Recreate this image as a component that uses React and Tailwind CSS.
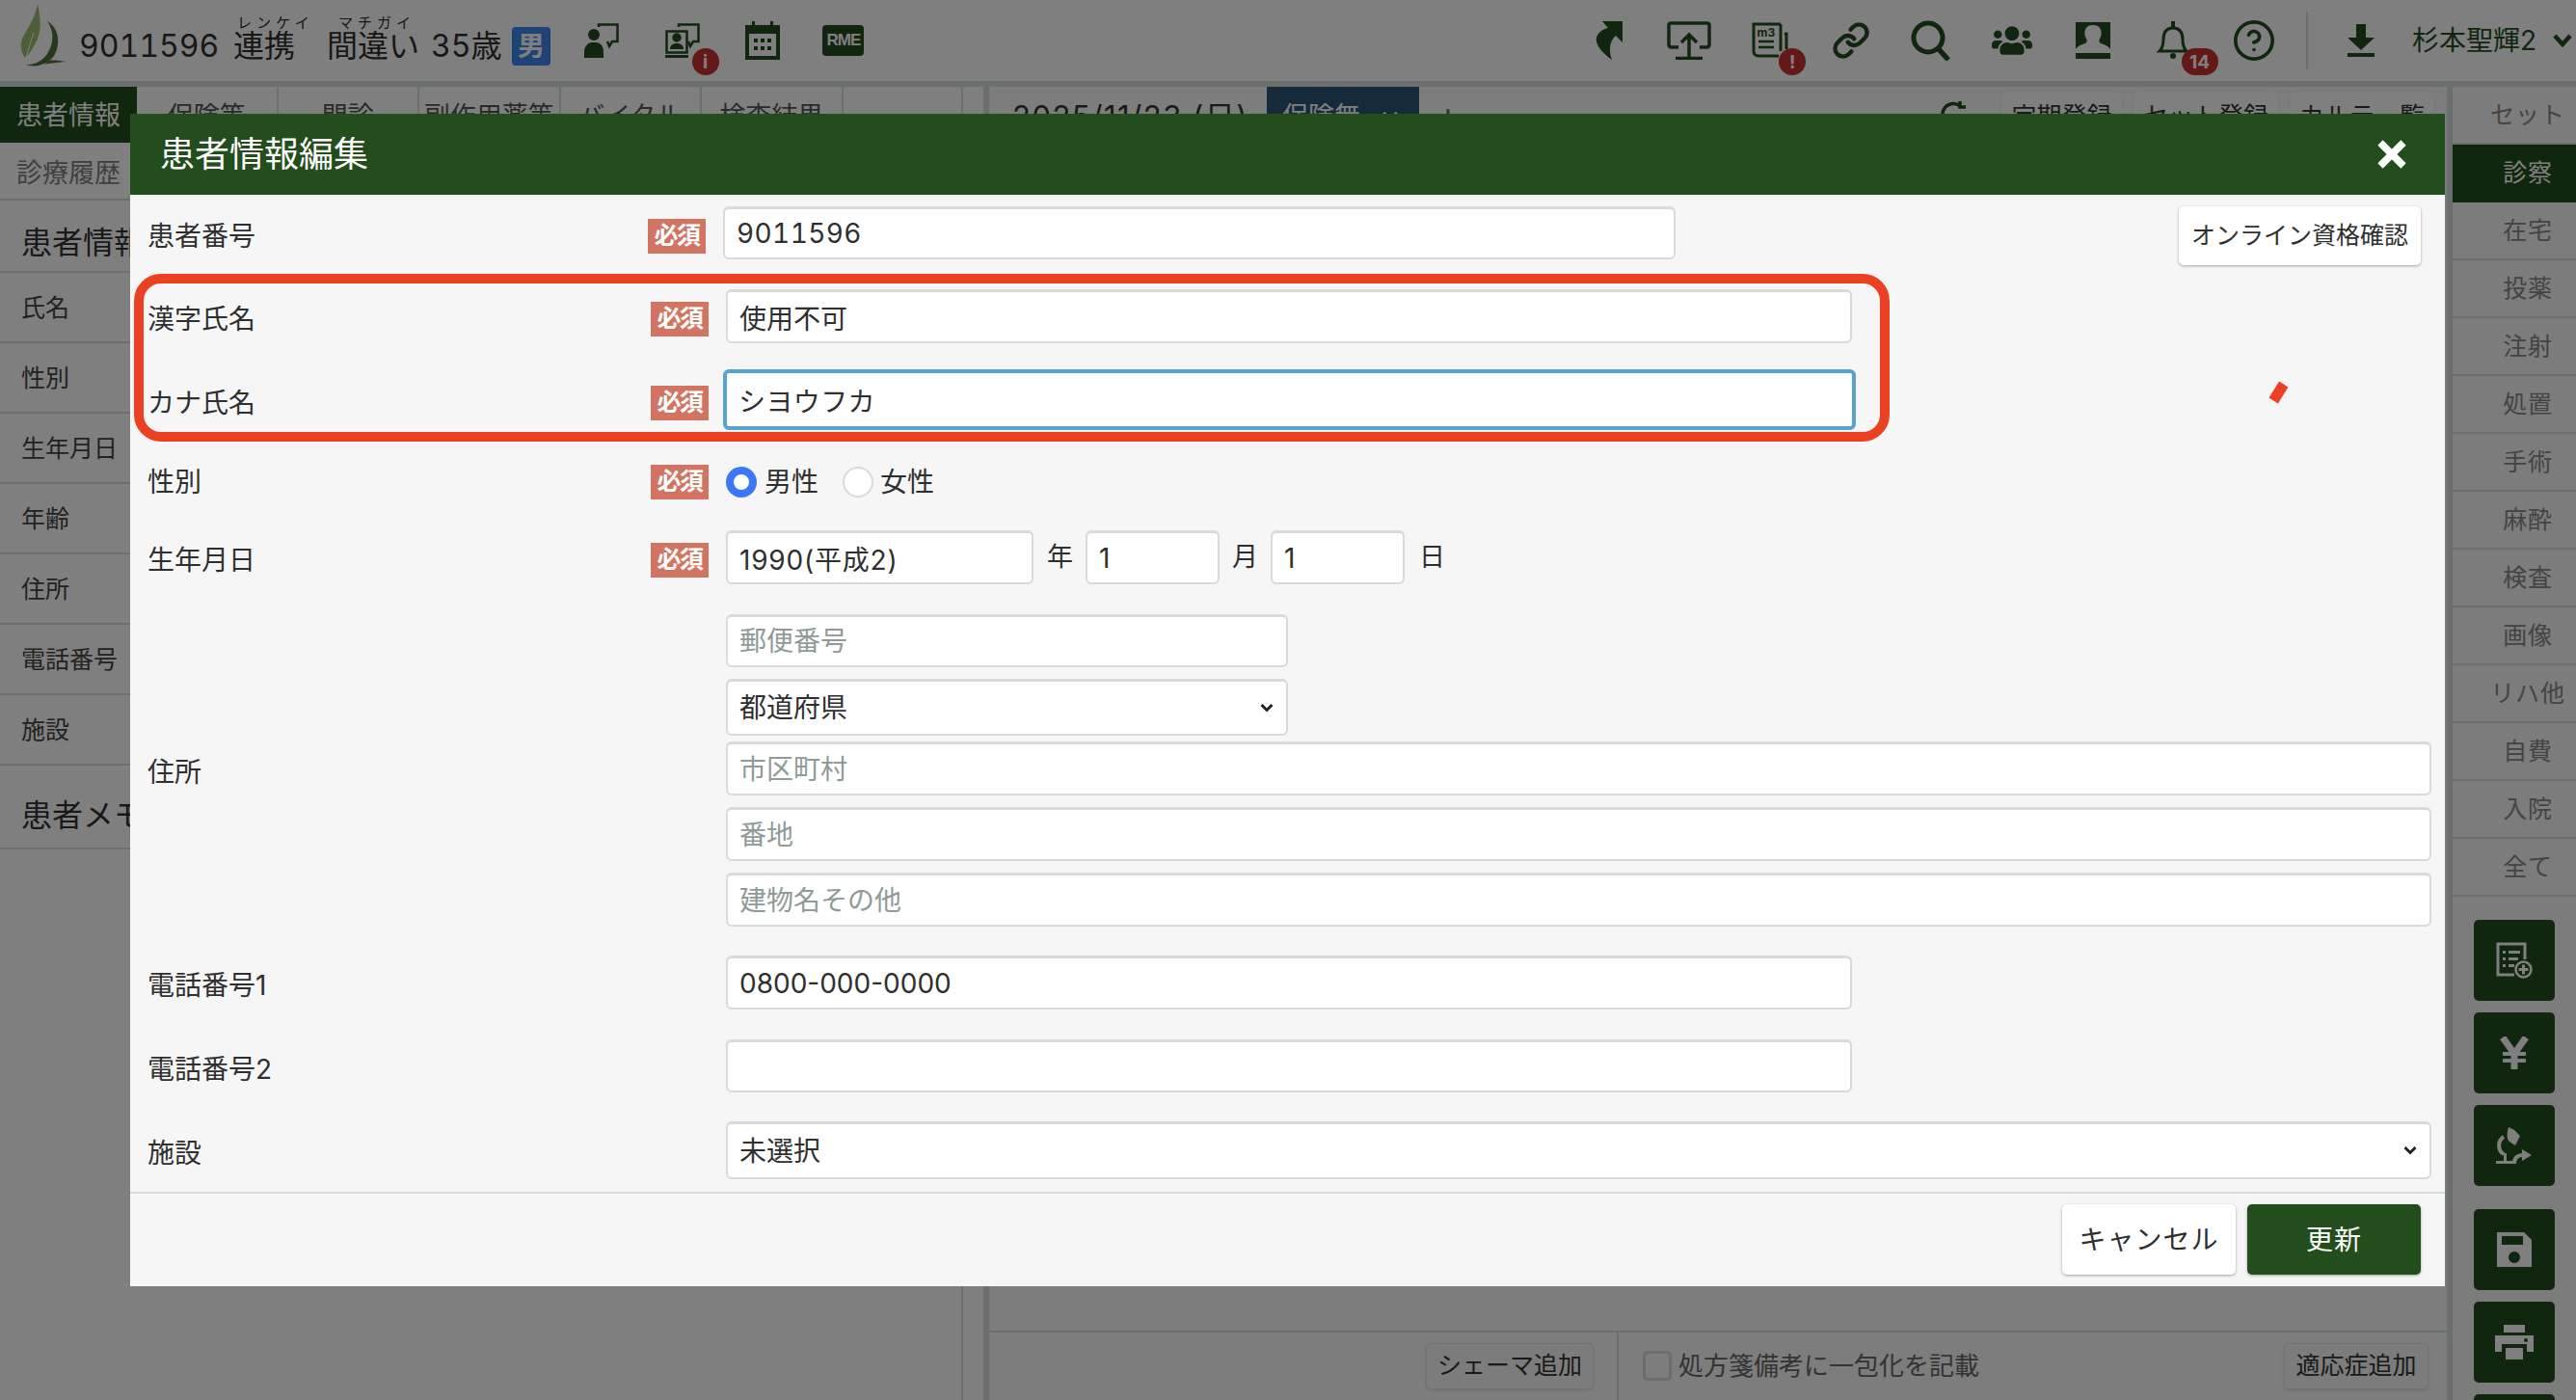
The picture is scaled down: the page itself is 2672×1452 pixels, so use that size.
import React from "react";
import { Link as LinkIcon, CircleHelp } from "lucide-react";
import { FaUsers } from "react-icons/fa";

const GREEN = "#234d1c";

const sideItems = ["氏名", "性別", "生年月日", "年齢", "住所", "電話番号", "施設"];
const topTabs = ["保険等", "問診", "副作用薬等", "バイタル", "検査結果"];
const rightTabs = ["セット", "診察", "在宅", "投薬", "注射", "処置", "手術", "麻酔", "検査", "画像", "リハ他", "自費", "入院", "全て"];

function Logo() {
  return (
    <svg width="72" height="76" viewBox="0 0 72 76" className="ml-[10px] shrink-0">
      <path d="M29 0C32 14 34 30 26 42C22 50 18 54 16 56C12 50 10 42 14 34C18 26 26 16 29 0Z" fill="#98be70" />
      <path d="M14 64L25 30" stroke="#ffffff" strokeWidth="1" />
      <path d="M39 18C50 24 54 40 46 54C42 60 36 62 30 64C24 65 20 64 17 63C26 64 36 58 40 50C46 40 46 28 39 18Z" fill="#4c7238" />
      <path d="M40 59C46 58 52 59 59 60C50 61 44 61 36 63Z" fill="#4c7238" />
    </svg>
  );
}

function Badge({ children, className = "" }) {
  return (
    <span className={`absolute flex h-[28px] w-[28px] items-center justify-center rounded-full bg-[#c83232] text-[19px] font-bold leading-none text-white ${className}`}>
      {children}
    </span>
  );
}

function HeadIcon({ children, className = "" }) {
  return <div className={`relative flex h-[84px] w-[83.7px] shrink-0 items-center justify-center ${className}`}>{children}</div>;
}

function Required({ flat = false }) {
  return (
    <span className={`flex h-[36px] w-[60px] shrink-0 items-center justify-center bg-[#d37362] text-[25px] font-bold tracking-[-1.5px] text-white ${flat ? "" : "mt-[6px]"}`}>
      必須
    </span>
  );
}

function Label({ children, className = "w-[522px]", flat = false }) {
  return <div className={`shrink-0 text-[28px] leading-none text-[#2f2f2f] ${flat ? "" : "mt-[6px]"} ${className}`}>{children}</div>;
}

const inputCls =
  "block rounded-[6px] border-2 border-t-[3px] border-[#d5dcda] bg-white px-[12px] text-[28px] text-[#2f2f2f] outline-none placeholder:text-[#8e9b97]";

function Chevron() {
  return (
    <svg width="14" height="10" viewBox="0 0 14 10" className="pointer-events-none absolute right-[15px] top-1/2 -translate-y-1/2">
      <path d="M1.5 2L7 7.5L12.5 2" fill="none" stroke="#222222" strokeWidth="3" />
    </svg>
  );
}

function Header() {
  return (
    <header className="flex h-[90px] items-center border-b-[6px] border-[#d7dedc] bg-white text-[#2f2f2f]">
      <Logo />
      <div className="mt-[12px] flex items-center text-[32px] leading-none tabular-nums">
        <span className="w-[160px]">9011596</span>
        <span className="relative w-[64px] whitespace-nowrap">
          連携
          <span className="absolute left-[4px] top-[-16px] text-[15px] leading-none tracking-[5px]">レンケイ</span>
        </span>
        <span className="relative ml-[33px] w-[96px] whitespace-nowrap">
          間違い
          <span className="absolute left-[12px] top-[-16px] text-[15px] leading-none tracking-[5px]">マチガイ</span>
        </span>
        <span className="ml-[12px] w-[84px]">35歳</span>
      </div>
      <span className="mt-[12px] flex h-[40px] w-[40px] items-center justify-center rounded-[4px] bg-[#3a86ee] text-[28px] font-bold leading-none text-white">男</span>
      <div className="ml-[11px] flex">
        <HeadIcon>
          <svg width="36" height="36" viewBox="0 0 36 36" fill={GREEN}>
            <circle cx="10" cy="12" r="6" />
            <path d="M0 36V30C0 23 5 20 8 20H12C16 20 20 23 20 30V36Z" />
            <path d="M15 4V1.5H34.5V19H29L26 24L24 19" fill="none" stroke={GREEN} strokeWidth="2.5" />
          </svg>
        </HeadIcon>
        <HeadIcon>
          <svg width="36" height="36" viewBox="0 0 36 36" fill="none" stroke={GREEN} strokeWidth="2.5">
            <path d="M14 4V1.5H34.5V19H29L26 24L24 19" />
            <rect x="1.5" y="8.5" width="21" height="22" />
            <circle cx="12" cy="15" r="3.5" fill={GREEN} />
            <path d="M5 27C5 22 9 21 12 21C15 21 19 22 19 27Z" fill={GREEN} stroke="none" />
            <path d="M0 34.5H24" strokeWidth="3" />
          </svg>
          <Badge className="left-[52px] top-[50px]">i</Badge>
        </HeadIcon>
        <HeadIcon>
          <svg width="36" height="40" viewBox="0 0 36 40" fill={GREEN}>
            <path d="M0 4H7V0H10V4H26V0H29V4H36V40H0ZM4 13V36H32V13Z" fillRule="evenodd" />
            <path d="M9 18h4v4H9zM16 18h4v4h-4zM23 18h4v4h-4zM9 26h4v4H9zM16 26h4v4h-4zM23 26h4v4h-4z" />
          </svg>
        </HeadIcon>
        <HeadIcon>
          <span className="flex h-[32px] w-[43px] items-center justify-center rounded-[4px] bg-[#234d1c] text-[17px] font-bold tracking-[-1px] text-white [font-family:'Liberation_Sans',sans-serif]">RME</span>
        </HeadIcon>
      </div>

      <div className="ml-auto flex items-center">
        <HeadIcon>
          <svg width="28" height="40" viewBox="0 0 28 40" fill={GREEN}>
            <path d="M7 0H28V22L21 15C15 20 13 30 17 40C8 34 -1 24 1 17C2 12 8 8 13 7Z" />
          </svg>
        </HeadIcon>
        <HeadIcon>
          <svg width="46" height="40" viewBox="0 0 46 40" fill="none" stroke={GREEN} strokeWidth="3.5">
            <path d="M12 27H5C3 27 2 26 2 24V4C2 2 3 2 5 2H41C43 2 44 2 44 4V24C44 26 43 27 41 27H34" />
            <path d="M23 38V14M15 22L23 14L31 22" />
            <path d="M9 38.5H37" strokeWidth="3.5" />
          </svg>
        </HeadIcon>
        <HeadIcon>
          <svg width="38" height="38" viewBox="0 0 38 38" fill="none" stroke={GREEN}>
            <path d="M30 2H2V30C2 33 4 35 7 35H28" strokeWidth="3" />
            <path d="M30 2V30M34 12H36V28" strokeWidth="3" />
            <text x="5.5" y="15" fontSize="12" fontWeight="700" fill={GREEN} stroke="none">m3</text>
            <path d="M7 20H23M7 26H23" strokeWidth="2.5" />
          </svg>
          <Badge className="left-[51px] top-[50px]">!</Badge>
        </HeadIcon>
        <HeadIcon>
          <LinkIcon size={40} color={GREEN} strokeWidth={2.6} />
        </HeadIcon>
        <HeadIcon>
          <svg width="42" height="42" viewBox="0 0 42 42" fill="none" stroke={GREEN} strokeWidth="5">
            <circle cx="18" cy="18" r="15" />
            <path d="M28 29L39 41" strokeWidth="5.5" />
          </svg>
        </HeadIcon>
        <HeadIcon>
          <FaUsers size={42} color={GREEN} />
        </HeadIcon>
        <HeadIcon>
          <svg width="36" height="38" viewBox="0 0 36 38" fill={GREEN}>
            <path d="M0 0H36V28C33 24 29 23 26 22C24 21 24 19 25 17C27 14 27 11 26 8C25 4 21 3 18 3C15 3 11 4 10 8C9 11 9 14 11 17C12 19 12 21 10 22C7 23 3 24 0 28Z" />
            <path d="M0 32H36V38H0Z" />
          </svg>
        </HeadIcon>
        <HeadIcon>
          <svg width="34" height="40" viewBox="0 0 34 40" fill="none" stroke={GREEN} strokeWidth="3">
            <path d="M3 31C6 28 7 25 7 19C7 11 10 7 17 7C24 7 27 11 27 19C27 25 28 28 31 31Z" />
            <path d="M17 0V6" strokeWidth="4" />
            <circle cx="17" cy="36" r="3" fill={GREEN} stroke="none" />
          </svg>
          <span className="absolute left-[50px] top-[50px] flex h-[28px] w-[38px] items-center justify-center rounded-full bg-[#c83232] text-[19px] font-bold leading-none text-white">14</span>
        </HeadIcon>
        <HeadIcon>
          <CircleHelp size={46} color={GREEN} strokeWidth={1.9} />
        </HeadIcon>
        <div className="ml-[12px] h-[60px] w-[2px] bg-[#d7dedc]" />
        <svg width="28" height="34" viewBox="0 0 28 34" fill={GREEN} className="ml-[41px] shrink-0">
          <path d="M9 0H19V14H28L14 27L0 14H9ZM0 30H28V34H0Z" />
        </svg>
        <span className="ml-[39px] text-[28px] text-[#234d1c]">杉本聖輝2</span>
        <svg width="20" height="14" viewBox="0 0 20 14" className="ml-[17px] mr-[4px] shrink-0">
          <path d="M2 2L10 11L18 2" fill="none" stroke={GREEN} strokeWidth="4.5" />
        </svg>
      </div>
    </header>
  );
}

function SideButton({ children, className = "" }) {
  return <div className={`flex h-[84px] shrink-0 items-center justify-center rounded-[5px] bg-[#234d1c] ${className}`}>{children}</div>;
}

function Background() {
  return (
    <main className="flex h-[1362px]">
      <section className="flex w-[1020px] shrink-0">
        <aside className="w-[142px] shrink-0 bg-white">
          <div className="flex h-[58px] items-center justify-center bg-[#234d1c] pt-[2px] text-[27px] text-white">患者情報</div>
          <div className="flex h-[60px] items-center justify-center border-b-2 border-[#d7dedc] pt-[6px] text-[27px] text-[#808080]">診療履歴</div>
          <div className="flex h-[75px] items-center whitespace-nowrap border-b-2 border-[#d7dedc] pl-[22px] pt-[14px] text-[32px] text-[#333333]">患者情報</div>
          {sideItems.map((item) => (
            <div key={item} className="flex h-[73px] items-center whitespace-nowrap border-b-2 border-[#d7dedc] pl-[22px] pt-[2px] text-[25px] text-[#444444]">
              {item}
            </div>
          ))}
          <div className="flex h-[87px] items-center whitespace-nowrap border-b-2 border-[#d7dedc] pl-[22px] pt-[18px] text-[32px] text-[#333333]">患者メモ</div>
        </aside>
        <div className="mr-[21px] flex-1 border-r-2 border-[#d7dedc]">
          <div className="flex h-[58px]">
            {topTabs.map((tab) => (
              <div key={tab} className="flex w-[146.5px] items-center justify-center whitespace-nowrap border-r-2 border-[#d7dedc] pt-[5px] text-[27px] text-[#555555]">
                {tab}
              </div>
            ))}
          </div>
        </div>
      </section>
      <section className="flex flex-1 flex-col border-x-[6px] border-[#d7dedc] bg-[#fafafa]">
        <div className="flex h-[58px] items-center text-[#333333]">
          <span className="ml-[24px] mt-[4px] w-[264px] text-[31px] tracking-[1.5px]">2025/11/23 (日)</span>
          <div className="flex h-[58px] w-[158px] items-center bg-[#2a5678] pl-[16px] pt-[4px] text-[27px] text-white">
            保険無
            <svg width="18" height="12" viewBox="0 0 18 12" className="ml-[22px]">
              <path d="M2 2L9 9L16 2" fill="none" stroke="#ffffff" strokeWidth="3.5" />
            </svg>
          </div>
          <span className="ml-[18px] text-[36px] text-[#666666]">+</span>
          <svg width="30" height="30" viewBox="0 0 30 30" fill="none" stroke={GREEN} strokeWidth="3.5" className="ml-[498px]">
            <path d="M25 15A11 11 0 1 1 21 6M21 1V7H27" />
          </svg>
          <div className="ml-auto mr-[13px] mt-[5px] flex gap-[12px] self-start text-[26px] text-[#333333]">
            <span className="w-[125px] rounded-[6px] bg-white py-[6px] text-center shadow">定期登録</span>
            <span className="w-[150px] rounded-[6px] bg-white py-[6px] text-center shadow">セット登録</span>
            <span className="w-[150px] rounded-[6px] bg-white py-[6px] text-center shadow">カルテ一覧</span>
          </div>
        </div>
        <div className="flex-1" />
        <div className="flex h-[72px] border-t-2 border-[#d7dedc] text-[25px]">
          <div className="flex w-[653px] justify-end border-r-2 border-[#d7dedc] pr-[24px] pt-[11px]">
            <span className="flex h-[48px] w-[174px] items-center justify-center rounded-[5px] border border-[#e5e5e5] bg-[#f8f8f8] text-[#333333] shadow">シェーマ追加</span>
          </div>
          <div className="flex flex-1 items-start pt-[11px]">
            <span className="ml-[25px] mt-[8px] h-[31px] w-[30px] rounded-[5px] border-[3px] border-[#d5dcda] bg-[#fafafa]" />
            <span className="ml-[7px] mt-[8px] text-[26px] leading-[31px] text-[#666666]">処方箋備考に一包化を記載</span>
            <span className="ml-auto mr-[19px] flex h-[48px] w-[150px] items-center justify-center rounded-[5px] border border-[#e5e5e5] bg-[#f8f8f8] text-[#333333] shadow">適応症追加</span>
          </div>
        </div>
      </section>
      <aside className="w-[128px] shrink-0 bg-[#f8f8f8]">
        {rightTabs.map((tab) => (
          <div
            key={tab}
            className={`flex h-[60px] items-center justify-center border-b-2 pl-[28px] pt-[2px] text-[25px] tracking-[0.8px] ${tab === "診察" ? "border-[#234d1c] bg-[#234d1c] text-white" : "border-[#d7dedc] text-[#888888]"}`}
          >
            {tab}
          </div>
        ))}
        <div className="ml-[22px] mt-[24px] flex w-[84px] flex-col gap-[12px]">
          <SideButton>
            <svg width="38" height="38" viewBox="0 0 38 38" fill="none" stroke="#ffffff">
              <path d="M30 18V2H2V34H19" strokeWidth="3" />
              <path d="M7 9h3v3H7zM13 9h12v3H13zM7 16h3v3H7zM13 16h10v3H13zM7 23h3v3H7zM13 23h6v3h-6z" fill="#ffffff" stroke="none" />
              <circle cx="28.5" cy="28.5" r="8" strokeWidth="2.5" />
              <path d="M28.5 23.5V33.5M23.5 28.5H33.5" strokeWidth="3" />
            </svg>
          </SideButton>
          <SideButton>
            <svg width="30" height="34" viewBox="0 0 30 34" fill="none" stroke="#ffffff">
              <path d="M3 1L15 18L27 1" strokeWidth="7" />
              <path d="M15 16V34" strokeWidth="7" />
              <path d="M3 18H27M3 25H27" strokeWidth="4" />
            </svg>
          </SideButton>
          <SideButton>
            <svg width="38" height="40" viewBox="0 0 38 40" fill="#ffffff">
              <path d="M13 1L19 4L25 10L22 16L20 20L14 16C11 14 11 8 13 1Z" />
              <path d="M8 11C2 15 1 25 8 29" fill="none" stroke="#ffffff" strokeWidth="4" />
              <path d="M0 36H19V39H0ZM8 28H11V36H8Z" />
              <path d="M17 39C17 32 20 29 27 28V24L37 30L27 36V32C23 32 21 35 21 39Z" />
            </svg>
          </SideButton>
          <SideButton className="mt-[12px]">
            <svg width="36" height="36" viewBox="0 0 36 36" fill="#ffffff">
              <path d="M0 0H28L36 8V36H0ZM5 4V13H27V4ZM18 20A6 6 0 1 0 18 32A6 6 0 1 0 18 20Z" fillRule="evenodd" />
            </svg>
          </SideButton>
          <SideButton>
            <svg width="40" height="36" viewBox="0 0 40 36" fill="#ffffff">
              <path d="M9 0H31V8H9Z" />
              <path d="M0 11H40V28H33V20H7V28H0ZM32 14A2 2 0 1 0 32 18A2 2 0 1 0 32 14Z" fillRule="evenodd" />
              <path d="M11 24H29V36H11Z" />
            </svg>
          </SideButton>
          <SideButton />
        </div>
      </aside>
    </main>
  );
}

function PatientModal() {
  return (
    <div className="absolute left-[135px] top-[118px] flex h-[1216px] w-[2401px] flex-col bg-[#f6f6f6]">
      <div className="flex h-[84px] shrink-0 items-center justify-between bg-[#234d1c] pl-[31px] pr-[40px] text-[36px] text-white">
        患者情報編集
        <svg width="30" height="30" viewBox="0 0 30 30">
          <path d="M3 3L27 27M27 3L3 27" stroke="#ffffff" strokeWidth="7.5" />
        </svg>
      </div>

      <div className="flex-1 pl-[18px] pr-[14px]">
        <div className="mt-[12px] flex h-[55px] items-center">
          <Label className="w-[519px]">患者番号</Label>
          <Required />
          <input className={`ml-[18px] h-[55px] w-[988px] tabular-nums tracking-[0.4px] ${inputCls}`} defaultValue="9011596" />
          <button className="ml-auto mr-[11px] h-[61px] w-[251px] self-start rounded-[5px] bg-white text-[25px] text-[#2f2f2f] shadow-[0_1px_3px_rgba(0,0,0,0.35)]">
            オンライン資格確認
          </button>
        </div>
        <div className="mt-[31px] flex h-[56px] items-center">
          <Label>漢字氏名</Label>
          <Required />
          <input className={`ml-[18px] h-[56px] w-[1168px] ${inputCls}`} defaultValue="使用不可" />
        </div>
        <div className="mt-[30px] flex h-[57px] items-center">
          <Label>カナ氏名</Label>
          <Required />
          <input
            className="ml-[15px] h-[63px] w-[1175px] rounded-[6px] border-4 border-[#57a5cf] bg-white px-[12px] text-[28px] tracking-[0.4px] text-[#2f2f2f] outline-none"
            defaultValue="シヨウフカ"
          />
        </div>
        <div className="mt-[41px] flex h-[32px] items-center text-[28px] text-[#2f2f2f]">
          <Label flat>性別</Label>
          <Required flat />
          <span className="ml-[18px] h-[32px] w-[32px] rounded-full border-[8px] border-[#3b78f7] bg-white" />
          <span className="ml-[8px]">男性</span>
          <span className="ml-[25px] h-[32px] w-[32px] rounded-full border-2 border-[#d5dcda] bg-white" />
          <span className="ml-[7px]">女性</span>
        </div>
        <div className="mt-[34px] flex h-[56px] items-center text-[27px] text-[#2f2f2f]">
          <Label>生年月日</Label>
          <Required />
          <input className={`ml-[18px] h-[56px] w-[319px] tracking-[0.8px] ${inputCls}`} defaultValue="1990(平成2)" />
          <span className="ml-[14px]">年</span>
          <input className={`ml-[13px] h-[56px] w-[139px] ${inputCls}`} defaultValue="1" />
          <span className="ml-[13px]">月</span>
          <input className={`ml-[13px] h-[56px] w-[139px] ${inputCls}`} defaultValue="1" />
          <span className="ml-[15px]">日</span>
        </div>

        <div className="mt-[31px] flex h-[324px] items-center">
          <Label flat className="mt-[4px] w-[600px]">住所</Label>
          <div className="flex h-full flex-1 flex-col gap-[12px]">
            <input className={`h-[55px] w-[583px] ${inputCls}`} placeholder="郵便番号" />
            <div className="relative h-[59px] w-[583px]">
              <select className={`h-full w-full appearance-none ${inputCls}`} defaultValue="">
                <option value="">都道府県</option>
              </select>
              <Chevron />
            </div>
            <input className={`-mt-[6px] h-[56px] w-[1769px] ${inputCls}`} placeholder="市区町村" />
            <input className={`h-[56px] w-[1769px] ${inputCls}`} placeholder="番地" />
            <input className={`h-[56px] w-[1769px] ${inputCls}`} placeholder="建物名その他" />
          </div>
        </div>

        <div className="mt-[30px] flex h-[56px] items-center">
          <Label className="w-[600px]">電話番号1</Label>
          <input className={`h-[56px] w-[1168px] ${inputCls}`} defaultValue="0800-000-0000" />
        </div>
        <div className="mt-[31px] flex h-[55px] items-center">
          <Label className="w-[600px]">電話番号2</Label>
          <input className={`h-[55px] w-[1168px] ${inputCls}`} />
        </div>
        <div className="mt-[30px] flex h-[60px] items-center">
          <Label className="w-[600px]">施設</Label>
          <div className="relative h-[60px] w-[1769px]">
            <select className={`h-full w-full appearance-none ${inputCls}`} defaultValue="">
              <option value="">未選択</option>
            </select>
            <Chevron />
          </div>
        </div>
      </div>

      <div className="flex h-[98px] shrink-0 justify-end gap-[12px] border-t-2 border-[#d5dcda] pr-[25px] pt-[11px] text-[28px] tracking-[1px]">
        <button className="h-[73px] w-[180px] rounded-[5px] bg-white text-[#2f2f2f] shadow-[0_1px_3px_rgba(0,0,0,0.35)]">キャンセル</button>
        <button className="h-[73px] w-[180px] rounded-[5px] bg-[#234d1c] text-white shadow-[0_1px_3px_rgba(0,0,0,0.35)]">更新</button>
      </div>

      {/* red annotation drawn on top of the screenshot */}
      <div className="absolute left-[4px] top-[166px] h-[174px] w-[1821px] rounded-[28px] border-[10px] border-[#ec4023]" />
      <div className="absolute left-[2223px] top-[279px] h-[20px] w-[11px] rotate-[32deg] bg-[#ec4023]" />
    </div>
  );
}

export default function App() {
  return (
    <div className="relative isolate h-[1452px] w-[2672px] overflow-hidden bg-white [font-family:'Inter','Noto_Sans_CJK_JP',sans-serif]">
      <Header />
      <Background />
      <div className="absolute inset-0 bg-black/50" />
      <PatientModal />
    </div>
  );
}
